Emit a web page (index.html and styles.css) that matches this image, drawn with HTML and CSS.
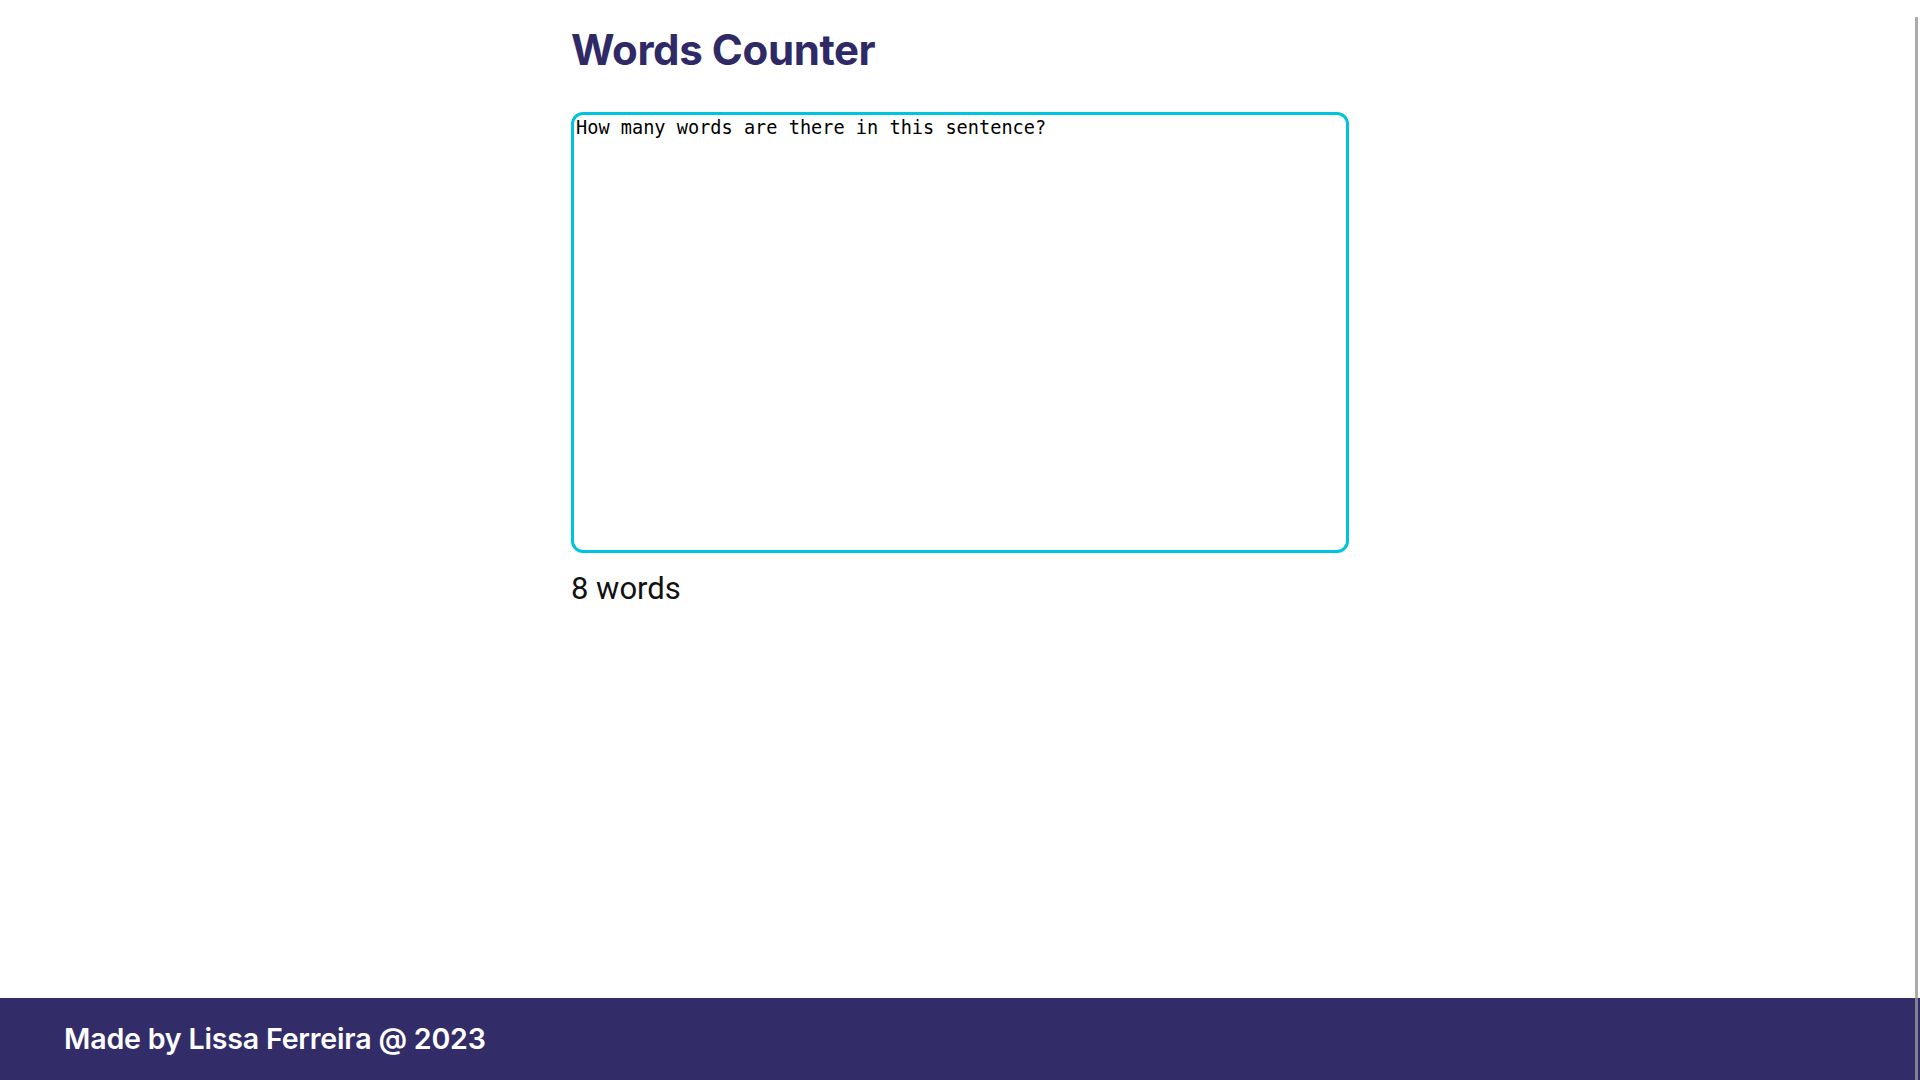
FILE: index.html
```html
<!DOCTYPE html>
<html lang="en">
<head>
<meta charset="utf-8">
<title>Words Counter</title>
<link rel="stylesheet" href="styles.css">
</head>
<body>
<main class="app">
  <h1 class="title">Words Counter</h1>
  <textarea class="editor">How many words are there in this sentence?</textarea>
  <p class="count">8 words</p>
</main>
<footer class="footer">
  <p class="footer-text">Made by Lissa Ferreira @ 2023</p>
</footer>
<div class="scroll-thumb"></div>
</body>
</html>
```
FILE: styles.css
```css
html, body {
  margin: 0;
  padding: 0;
  height: 100%;
}
body {
  display: flex;
  flex-direction: column;
  min-height: 100vh;
  background: #ffffff;
  font-family: Inter, "Noto Sans", sans-serif;
}
.app {
  flex: 1;
  width: 778px;
  margin: 0 auto;
  display: flex;
  flex-direction: column;
}
.title {
  margin: 22px 0 0 0;
  font-size: 42px;
  line-height: 56px;
  font-weight: 700;
  color: #2f2a66;
  letter-spacing: -0.4px;
}
.editor {
  margin-top: 34px;
  width: 778px;
  height: 441px;
  box-sizing: border-box;
  border: 3px solid #00c4de;
  border-radius: 12px;
  padding: 2px 2px;
  font-family: "DejaVu Sans Mono", monospace;
  font-size: 18.6px;
  line-height: 22px;
  color: #000;
  resize: none;
  outline: none;
}
.count {
  margin: 18px 0 0 0;
  font-family: Roboto, sans-serif;
  font-size: 31px;
  line-height: 36px;
  color: #111;
}
.footer {
  height: 82px;
  background: #322d68;
  display: flex;
  align-items: center;
  padding-left: 64px;
}
.footer-text {
  margin: 0;
  color: #ffffff;
  font-size: 28.6px;
  font-weight: 600;
  letter-spacing: -0.2px;
  padding-bottom: 1px;
}
.scroll-thumb {
  position: fixed;
  right: 2px;
  top: 17px;
  bottom: 0;
  width: 3px;
  background: rgba(150, 150, 150, 0.8);
}
```
